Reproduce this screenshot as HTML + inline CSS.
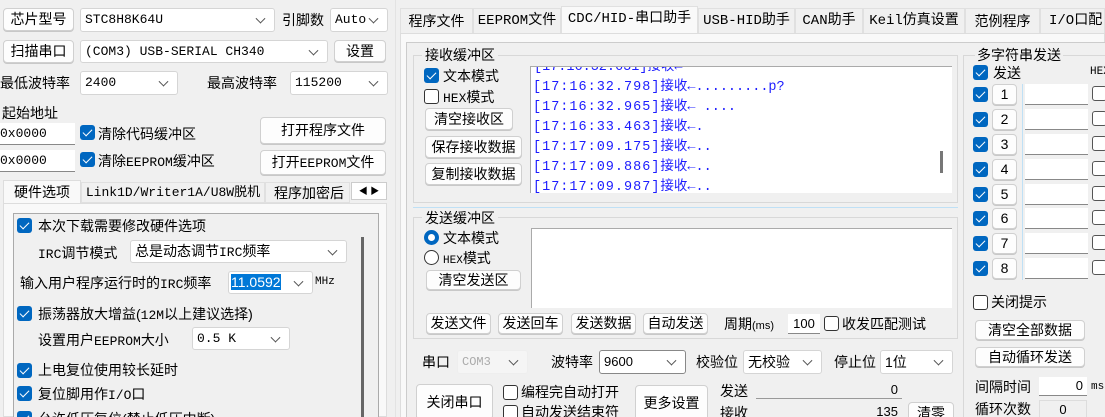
<!DOCTYPE html>
<html style="overflow:hidden;height:417px"><head><meta charset="utf-8"><style>
*{box-sizing:border-box;margin:0;padding:0}
body{width:1105px;height:417px;overflow:hidden;background:#f0f0f0;font-family:"Liberation Sans","Noto Sans CJK SC",sans-serif;font-size:14px;color:#000;position:relative}
.a{position:absolute;white-space:nowrap}
.btn{position:absolute;background:#fdfdfd;border:1px solid #d0d0d0;border-radius:4px;text-align:center;white-space:nowrap;box-shadow:0 1px 0 #c8c8c8}
.cmb{position:absolute;background:#fff;border:1px solid #d5d5d5;border-radius:3px;padding-left:4px;white-space:nowrap;font-family:"Liberation Mono","Noto Sans CJK SC",monospace;font-size:13px}
.cmb:after{content:"";position:absolute;right:10px;top:50%;width:6px;height:6px;border-right:1px solid #555;border-bottom:1px solid #555;transform:translateY(-70%) rotate(45deg)}
.cb{position:absolute;width:15px;height:15px;border-radius:3px;background:#0067c0}
.cb:after{content:"";position:absolute;left:5px;top:2px;width:4px;height:8px;border-right:1.5px solid #fff;border-bottom:1.5px solid #fff;transform:rotate(45deg)}
.ucb{position:absolute;width:15px;height:15px;border-radius:3px;background:#fff;border:1px solid #333}
.inp{position:absolute;background:#fff;border-bottom:1px solid #888;font-family:"Liberation Mono",monospace;font-size:13px;white-space:nowrap}
.m{font-family:"Liberation Mono","Noto Sans CJK SC",monospace;font-size:13px}
.tab{position:absolute;top:8px;height:25px;background:#f0f0f0;border:1px solid #e0e0e0;border-bottom:none;text-align:center;line-height:25px;font-size:14px}
.log{position:absolute;left:533px;font-family:"Liberation Mono","Noto Sans CJK SC",monospace;font-size:13.5px;color:#1c1cff;white-space:nowrap}
.log b{font-weight:normal;letter-spacing:1px}
</style></head><body>

<div class="btn" style="left:3px;top:8px;width:71px;height:23px;line-height:21px">芯片型号</div>
<div class="cmb" style="left:80px;top:8px;width:195px;height:24px;line-height:22px">STC8H8K64U</div>
<div class="a" style="left:282px;top:10px">引脚数</div>
<div class="cmb" style="left:330px;top:8px;width:58px;height:24px;line-height:22px">Auto</div>

<div class="btn" style="left:3px;top:40px;width:71px;height:23px;line-height:21px">扫描串口</div>
<div class="cmb" style="left:80px;top:40px;width:248px;height:23px;line-height:21px">(COM3) USB-SERIAL CH340</div>
<div class="btn" style="left:334px;top:40px;width:52px;height:22px;line-height:20px">设置</div>

<div class="a" style="left:0;top:73px">最低波特率</div>
<div class="cmb" style="left:80px;top:71px;width:98px;height:24px;line-height:22px">2400</div>
<div class="a" style="left:207px;top:73px">最高波特率</div>
<div class="cmb" style="left:290px;top:71px;width:98px;height:24px;line-height:22px">115200</div>

<div class="a" style="left:2px;top:103px">起始地址</div>
<div class="inp" style="left:0;top:123px;width:75px;height:22px;line-height:21px">0x0000</div>
<div class="cb" style="left:80px;top:125px"></div>
<div class="a" style="left:98px;top:124px">清除代码缓冲区</div>
<div class="btn" style="left:260px;top:117px;width:126px;height:27px;line-height:25px">打开程序文件</div>
<div class="inp" style="left:0;top:150px;width:75px;height:22px;line-height:21px">0x0000</div>
<div class="cb" style="left:80px;top:152px"></div>
<div class="a" style="left:98px;top:151px">清除<span class="m">EEPROM</span>缓冲区</div>
<div class="btn" style="left:260px;top:150px;width:126px;height:25px;line-height:23px">打开<span class="m">EEPROM</span>文件</div>

<div class="a" style="left:3px;top:180px;width:78px;height:24px;background:#f9f9f9;border:1px solid #ddd;border-bottom:none;text-align:center;line-height:22px">硬件选项</div>
<div class="a m" style="left:81px;top:182px;width:184px;height:21px;border:1px solid #e0e0e0;text-align:center;line-height:20px">Link1D/Writer1A/U8W脱机</div>
<div class="a" style="left:265px;top:182px;width:85px;height:21px;overflow:hidden;border:1px solid #e0e0e0;line-height:20px;padding-left:8px">程序加密后</div>
<div class="a" style="left:351px;top:182px;width:36px;height:18px;background:#fff;border:1px solid #ccc;font-size:9px;line-height:16px;text-align:center">◀ ▶</div>
<div class="a" style="left:3px;top:203px;width:384px;height:214px;background:#f9f9f9;border:1px solid #ddd"></div>
<div class="a" style="left:13px;top:213px;width:366px;height:204px;border:1px solid #aaa;border-bottom:none;background:#f0f0f0"></div>
<div class="a" style="left:361px;top:237px;width:3px;height:180px;background:#666"></div>

<div class="cb" style="left:17px;top:218px"></div>
<div class="a" style="left:38px;top:216px">本次下载需要修改硬件选项</div>
<div class="a" style="left:38px;top:243px"><span class="m">IRC</span>调节模式</div>
<div class="cmb" style="left:130px;top:240px;width:217px;height:23px;line-height:21px;font-family:'Liberation Sans','Noto Sans CJK SC',sans-serif;font-size:14px">总是动态调节<span class="m">IRC</span>频率</div>
<div class="a" style="left:20px;top:273px">输入用户程序运行时的<span class="m">IRC</span>频率</div>
<div class="cmb" style="left:228px;top:271px;width:85px;height:23px;line-height:21px;padding-left:2px"><span style="background:#0078d7;color:#fff;font-family:'Liberation Sans';font-size:14px">11.0592</span></div>
<div class="a m" style="left:315px;top:276px;font-size:11px">MHz</div>
<div class="cb" style="left:17px;top:306px"></div>
<div class="a" style="left:38px;top:304px">振荡器放大增益(<span class="m">12M</span>以上建议选择)</div>
<div class="a" style="left:38px;top:330px">设置用户<span class="m">EEPROM</span>大小</div>
<div class="cmb" style="left:192px;top:327px;width:98px;height:23px;line-height:21px">0.5 K</div>
<div class="cb" style="left:17px;top:363px"></div>
<div class="a" style="left:38px;top:360px">上电复位使用较长延时</div>
<div class="cb" style="left:17px;top:386px"></div>
<div class="a" style="left:38px;top:384px">复位脚用作<span class="m">I/O</span>口</div>
<div class="cb" style="left:17px;top:411px"></div>
<div class="a" style="left:38px;top:409px">允许低压复位(禁止低压中断)</div>

<div class="a" style="left:395px;top:0;width:1px;height:417px;background:#e3e3e3"></div>
<div class="tab" style="left:400px;width:73px">程序文件</div>
<div class="tab m" style="left:473px;width:88px">EEPROM文件</div>
<div class="tab m" style="left:561px;top:6px;height:28px;width:137px;background:#f9f9f9">CDC/HID-串口助手</div>
<div class="tab m" style="left:698px;width:97px">USB-HID助手</div>
<div class="tab m" style="left:795px;width:68px">CAN助手</div>
<div class="tab m" style="left:863px;width:102px">Keil仿真设置</div>
<div class="tab" style="left:965px;width:75px">范例程序</div>
<div class="tab m" style="left:1040px;width:65px;text-align:left;padding-left:8px;overflow:hidden">I/O口配置</div>
<div class="a" style="left:400px;top:33px;width:705px;height:384px;background:#f9f9f9;border:1px solid #ddd;border-bottom:none"></div>
<div class="a" style="left:406px;top:42px;width:699px;height:375px;border:1px solid #ccc;border-bottom:none;border-right:none;background:#f0f0f0"></div>

<div class="a" style="left:413px;top:55px;width:545px;height:148px;border:1px solid #d8d8d8"></div>
<div class="a" style="left:422px;top:45px;background:#f0f0f0;padding:0 3px">接收缓冲区</div>
<div class="cb" style="left:424px;top:68px"></div>
<div class="a" style="left:443px;top:66px">文本模式</div>
<div class="ucb" style="left:424px;top:89px"></div>
<div class="a" style="left:443px;top:87px"><span class="m">HEX</span>模式</div>
<div class="btn" style="left:425px;top:108px;width:88px;height:22px;line-height:20px">清空接收区</div>
<div class="btn" style="left:425px;top:136px;width:97px;height:22px;line-height:20px">保存接收数据</div>
<div class="btn" style="left:425px;top:163px;width:97px;height:22px;line-height:20px">复制接收数据</div>
<div class="a" style="left:530px;top:66px;width:422px;height:127px;background:#fff;border-top:1px solid #aaa;border-left:1px solid #aaa;overflow:hidden">
<div class="log" style="left:3px;top:-13px">[17:16:32.631]接收←</div>
<div class="a" style="left:409px;top:84px;width:3px;height:22px;background:#777"></div>
</div>
<div class="log" style="top:74px"><b>[17:16:32.798]</b>接收←.........p?</div>
<div class="log" style="top:94px"><b>[17:16:32.965]</b>接收←  ....</div>
<div class="log" style="top:114px"><b>[17:16:33.463]</b>接收←.</div>
<div class="log" style="top:134px"><b>[17:17:09.175]</b>接收←..</div>
<div class="log" style="top:154px"><b>[17:17:09.886]</b>接收←..</div>
<div class="log" style="top:174px"><b>[17:17:09.987]</b>接收←..</div>
<div class="a" style="left:413px;top:207px;width:545px;height:1px;background:#bfe0f5"></div>

<div class="a" style="left:413px;top:217px;width:545px;height:122px;border:1px solid #d8d8d8"></div>
<div class="a" style="left:422px;top:208px;background:#f0f0f0;padding:0 3px">发送缓冲区</div>
<div class="a" style="left:424px;top:230px;width:15px;height:15px;border-radius:50%;background:#0067c0"><div style="position:absolute;left:4px;top:4px;width:7px;height:7px;border-radius:50%;background:#fff"></div></div>
<div class="a" style="left:443px;top:228px">文本模式</div>
<div class="a" style="left:424px;top:250px;width:15px;height:15px;border-radius:50%;border:1px solid #333;background:#fff"></div>
<div class="a" style="left:443px;top:248px"><span class="m" style="font-size:11px">HEX</span>模式</div>
<div class="btn" style="left:426px;top:270px;width:95px;height:20px;line-height:18px">清空发送区</div>
<div class="a" style="left:531px;top:228px;width:421px;height:80px;background:#fff;border-top:1px solid #aaa;border-left:1px solid #aaa"></div>
<div class="btn" style="left:426px;top:313px;width:65px;height:21px;line-height:19px">发送文件</div>
<div class="btn" style="left:498px;top:313px;width:65px;height:21px;line-height:19px">发送回车</div>
<div class="btn" style="left:571px;top:313px;width:65px;height:21px;line-height:19px">发送数据</div>
<div class="btn" style="left:643px;top:313px;width:65px;height:21px;line-height:19px">自动发送</div>
<div class="a" style="left:724px;top:314px">周期<span style="font-size:11px">(ms)</span></div>
<div class="inp" style="left:788px;top:314px;width:32px;height:20px;line-height:19px;text-align:center;font-family:'Liberation Sans';font-size:13px">100</div>
<div class="ucb" style="left:824px;top:316px"></div>
<div class="a" style="left:842px;top:314px">收发匹配测试</div>

<div class="a" style="left:422px;top:352px">串口</div>
<div class="cmb" style="left:457px;top:350px;width:71px;height:24px;line-height:22px;border-color:#eee;background:#f5f5f5;color:#aaa;font-size:12px">COM3</div>
<div class="a" style="left:551px;top:352px">波特率</div>
<div class="cmb" style="left:599px;top:350px;width:87px;height:24px;line-height:22px;border-color:#888;font-family:'Liberation Sans'">9600</div>
<div class="a" style="left:696px;top:352px">校验位</div>
<div class="cmb" style="left:743px;top:350px;width:79px;height:24px;line-height:22px;font-family:'Liberation Sans','Noto Sans CJK SC';font-size:14px">无校验</div>
<div class="a" style="left:834px;top:352px">停止位</div>
<div class="cmb" style="left:880px;top:350px;width:73px;height:24px;line-height:22px;font-family:'Liberation Sans','Noto Sans CJK SC';font-size:14px">1位</div>
<div class="btn" style="left:416px;top:384px;width:77px;height:36px;line-height:34px">关闭串口</div>
<div class="ucb" style="left:503px;top:385px"></div>
<div class="a" style="left:521px;top:382px">编程完自动打开</div>
<div class="ucb" style="left:503px;top:405px"></div>
<div class="a" style="left:521px;top:402px">自动发送结束符</div>
<div class="btn" style="left:635px;top:385px;width:73px;height:36px;line-height:34px">更多设置</div>
<div class="a" style="left:720px;top:381px">发送</div>
<div class="a" style="left:756px;top:382px;width:146px;height:17px;background:#f0f0f0;border-bottom:1px solid #999;text-align:right;padding-right:4px;font-size:13px;line-height:16px">0</div>
<div class="a" style="left:720px;top:403px">接收</div>
<div class="a" style="left:756px;top:404px;width:146px;height:13px;background:#f0f0f0;text-align:right;padding-right:4px;font-size:13px;line-height:16px">135</div>
<div class="btn" style="left:908px;top:402px;width:46px;height:22px;line-height:20px">清零</div>

<div class="a" style="left:963px;top:55px;width:142px;height:362px;border:1px solid #d8d8d8;border-right:none;border-bottom:none"></div>
<div class="a" style="left:975px;top:45px;background:#f0f0f0;padding:0 2px">多字符串发送</div>
<div class="cb" style="left:973px;top:65px"></div>
<div class="a" style="left:993px;top:63px">发送</div>
<div class="a m" style="left:1090px;top:66px;font-size:11px">HEX</div>
<div class="a" style="left:1022px;top:84px;width:1px;height:196px;background:#bfe0f5"></div>

<div class="cb" style="left:973px;top:87px"></div><div class="btn" style="left:992px;top:84px;width:25px;height:21px;line-height:19px">1</div><div class="inp" style="left:1025px;top:84px;width:63px;height:21px"></div><div class="ucb" style="left:1092px;top:86px;border-color:#555"></div>
<div class="cb" style="left:973px;top:112px"></div><div class="btn" style="left:992px;top:109px;width:25px;height:21px;line-height:19px">2</div><div class="inp" style="left:1025px;top:109px;width:63px;height:21px"></div><div class="ucb" style="left:1092px;top:111px;border-color:#555"></div>
<div class="cb" style="left:973px;top:137px"></div><div class="btn" style="left:992px;top:134px;width:25px;height:21px;line-height:19px">3</div><div class="inp" style="left:1025px;top:134px;width:63px;height:21px"></div><div class="ucb" style="left:1092px;top:136px;border-color:#555"></div>
<div class="cb" style="left:973px;top:162px"></div><div class="btn" style="left:992px;top:159px;width:25px;height:21px;line-height:19px">4</div><div class="inp" style="left:1025px;top:159px;width:63px;height:21px"></div><div class="ucb" style="left:1092px;top:161px;border-color:#555"></div>
<div class="cb" style="left:973px;top:187px"></div><div class="btn" style="left:992px;top:184px;width:25px;height:21px;line-height:19px">5</div><div class="inp" style="left:1025px;top:184px;width:63px;height:21px"></div><div class="ucb" style="left:1092px;top:186px;border-color:#555"></div>
<div class="cb" style="left:973px;top:211px"></div><div class="btn" style="left:992px;top:208px;width:25px;height:21px;line-height:19px">6</div><div class="inp" style="left:1025px;top:208px;width:63px;height:21px"></div><div class="ucb" style="left:1092px;top:210px;border-color:#555"></div>
<div class="cb" style="left:973px;top:236px"></div><div class="btn" style="left:992px;top:233px;width:25px;height:21px;line-height:19px">7</div><div class="inp" style="left:1025px;top:233px;width:63px;height:21px"></div><div class="ucb" style="left:1092px;top:235px;border-color:#555"></div>
<div class="cb" style="left:973px;top:261px"></div><div class="btn" style="left:992px;top:258px;width:25px;height:21px;line-height:19px">8</div><div class="inp" style="left:1025px;top:258px;width:63px;height:21px"></div><div class="ucb" style="left:1092px;top:260px;border-color:#555"></div>

<div class="ucb" style="left:973px;top:295px"></div>
<div class="a" style="left:991px;top:292px">关闭提示</div>
<div class="btn" style="left:975px;top:320px;width:110px;height:20px;line-height:18px">清空全部数据</div>
<div class="btn" style="left:975px;top:347px;width:110px;height:20px;line-height:18px">自动循环发送</div>
<div class="a" style="left:975px;top:377px">间隔时间</div>
<div class="inp" style="left:1039px;top:377px;width:48px;height:19px;text-align:right;padding-right:4px;font-family:'Liberation Sans';line-height:18px">0</div>
<div class="a m" style="left:1091px;top:381px;font-size:11px">ms</div>
<div class="a" style="left:975px;top:399px">循环次数</div>
<div class="a" style="left:1039px;top:400px;width:48px;height:17px;background:#f0f0f0;border:1px solid #ddd;border-bottom:none;text-align:center;font-size:13px;line-height:17px">0</div>
</body></html>
